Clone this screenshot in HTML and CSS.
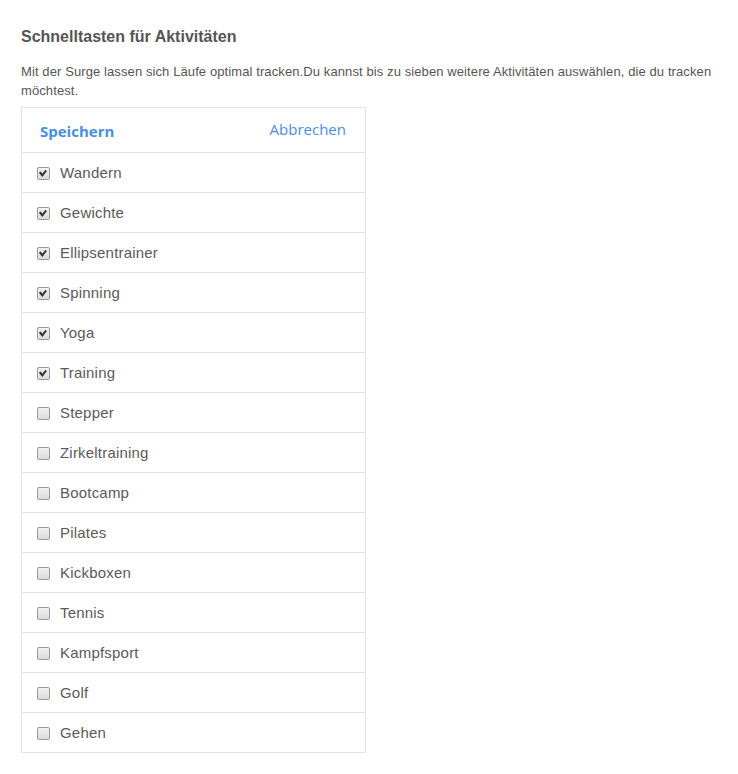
FILE: index.html
```html
<!DOCTYPE html>
<html lang="de">
<head>
    <meta charset="UTF-8">
    <meta name="viewport" content="width=device-width, initial-scale=1.0">
    <title>Schnelltasten</title>
    <link rel="stylesheet" href="styles.css">
</head>
<body>
    <div class="page">
        <h1>Schnelltasten für Aktivitäten</h1>
        <p class="intro">Mit der Surge lassen sich Läufe optimal tracken.Du kannst bis zu sieben weitere Aktivitäten auswählen, die du tracken möchtest.</p>
        <div class="panel">
            <div class="panel-head">
                <a class="save" href="#">Speichern</a>
                <a class="cancel" href="#">Abbrechen</a>
            </div>
            <ul class="activities">
                <li><span class="box checked"></span>Wandern</li>
                <li><span class="box checked"></span>Gewichte</li>
                <li><span class="box checked"></span>Ellipsentrainer</li>
                <li><span class="box checked"></span>Spinning</li>
                <li><span class="box checked"></span>Yoga</li>
                <li><span class="box checked"></span>Training</li>
                <li><span class="box"></span>Stepper</li>
                <li><span class="box"></span>Zirkeltraining</li>
                <li><span class="box"></span>Bootcamp</li>
                <li><span class="box"></span>Pilates</li>
                <li><span class="box"></span>Kickboxen</li>
                <li><span class="box"></span>Tennis</li>
                <li><span class="box"></span>Kampfsport</li>
                <li><span class="box"></span>Golf</li>
                <li><span class="box"></span>Gehen</li>
            </ul>
        </div>
    </div>
</body>
</html>
```

FILE: styles.css
```css
body {
    margin: 0;
    background-color: #fff;
    font-family: "Liberation Sans", Arial, sans-serif;
    color: #555;
}
.page {
    padding: 28px 21px 20px;
}
h1 {
    font-size: 16px;
    font-weight: bold;
    color: #555;
    margin: 0 0 16px;
    line-height: 18px;
}
.intro {
    font-size: 13px;
    line-height: 19px;
    letter-spacing: 0.1px;
    margin: 0 0 7px;
    color: #555;
}
.panel {
    width: 343px;
    border: 1px solid #e3e3e3;
}
.panel-head {
    display: flex;
    justify-content: space-between;
    align-items: center;
    height: 44px;
    padding: 0 19px 0 18px;
    border-bottom: 1px solid #e3e3e3;
}
.panel-head a {
    font-family: "Open Sans", sans-serif;
    color: #4a8ee0;
    text-decoration: none;
    font-size: 15px;
}
.save {
    font-weight: bold;
    font-size: 14.5px;
    margin-top: 2px;
}
.cancel {
    margin-top: -2px;
}
.activities {
    list-style: none;
    margin: 0;
    padding: 0;
}
.activities li {
    display: flex;
    align-items: center;
    height: 39px;
    padding-left: 15px;
    border-bottom: 1px solid #e3e3e3;
    font-size: 15px;
    letter-spacing: 0.2px;
    color: #5a5a5a;
}
.activities li:last-child {
    border-bottom: none;
}
.box {
    position: relative;
    width: 11px;
    height: 11px;
    margin: 2px 10px 0 0;
    border: 1px solid #9a9a9a;
    border-radius: 2px;
    background: linear-gradient(#f0f0f0, #dcdcdc);
}
.box.checked::after {
    content: "";
    position: absolute;
    left: 2px;
    top: 2px;
    width: 5px;
    height: 3px;
    border-left: 2px solid #333;
    border-bottom: 2px solid #333;
    transform: rotate(-50deg) skewX(-8deg);
    transform-origin: 40% 60%;
}
```
